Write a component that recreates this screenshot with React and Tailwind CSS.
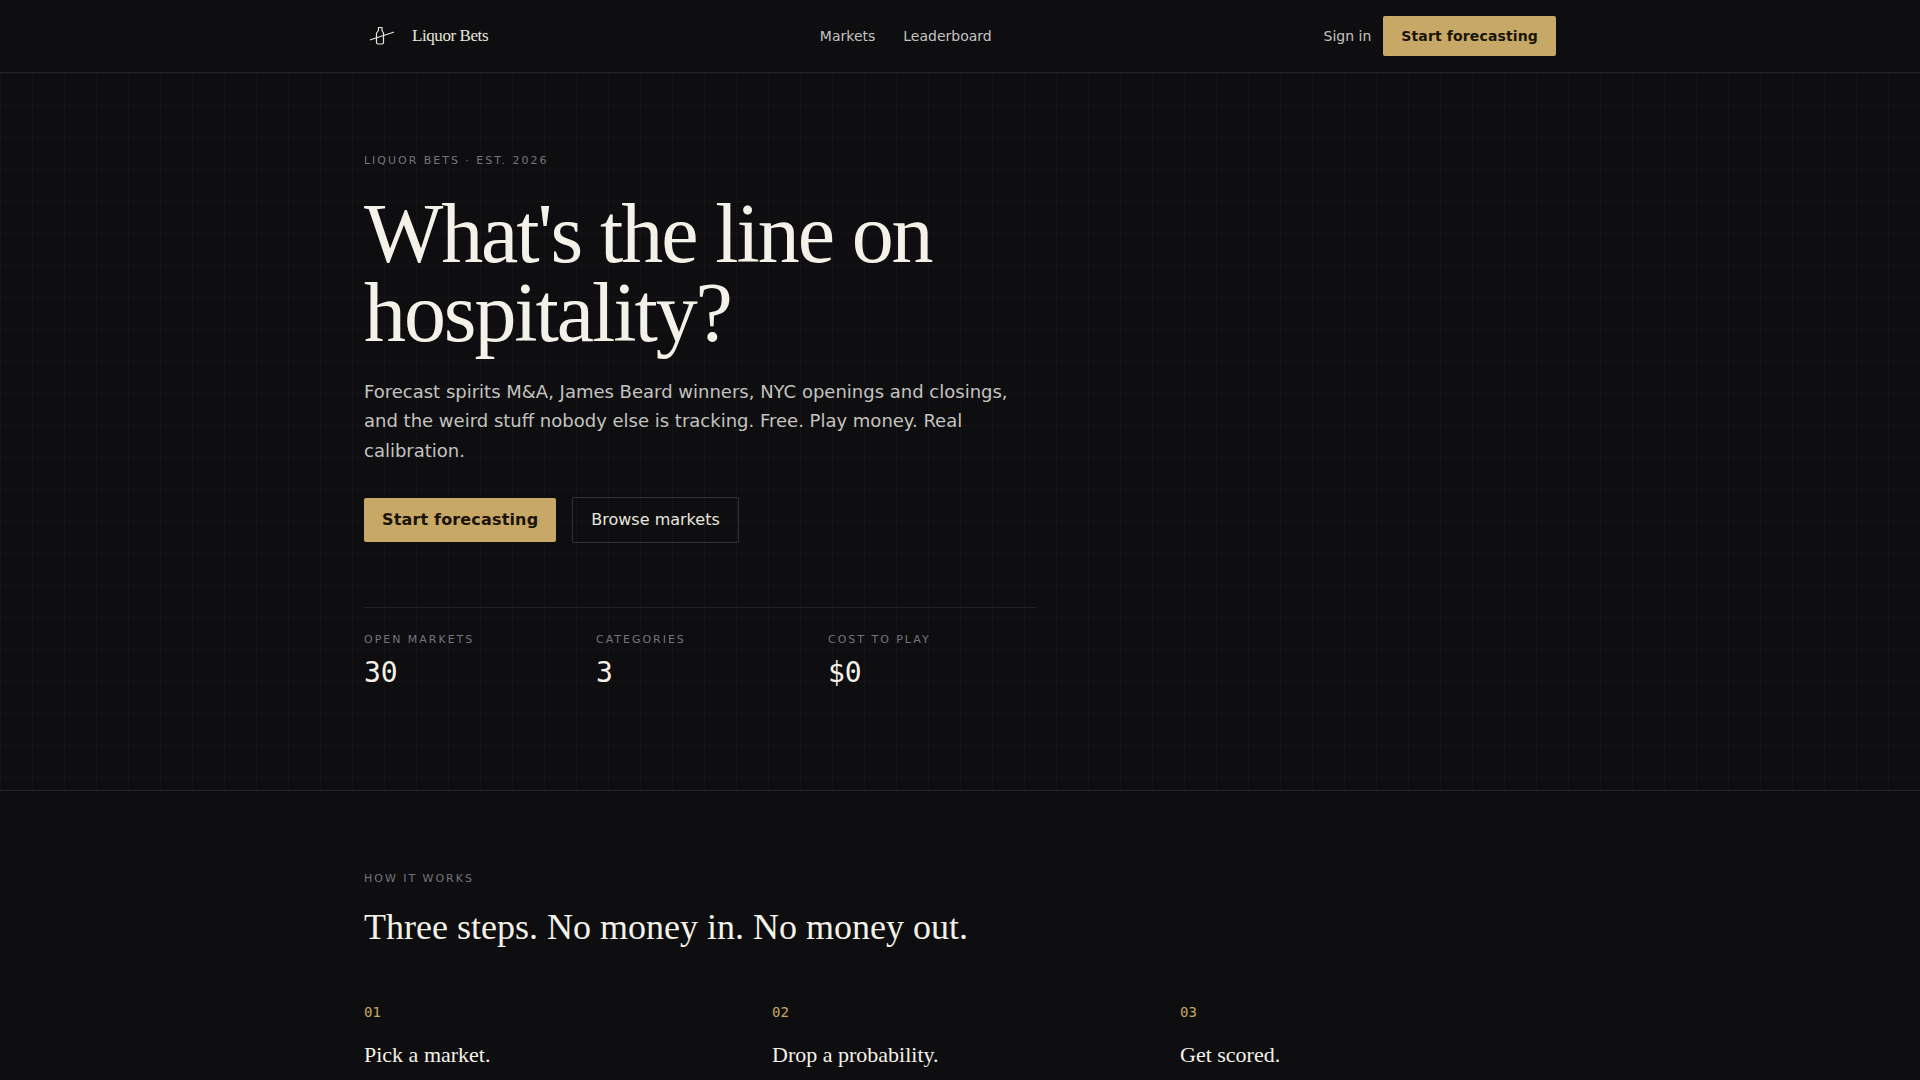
const stats = [
  { label: "Open markets", value: "30" },
  { label: "Categories", value: "3" },
  { label: "Cost to play", value: "$0" },
];

const steps = [
  { number: "01", title: "Pick a market." },
  { number: "02", title: "Drop a probability." },
  { number: "03", title: "Get scored." },
];

const Logo = () => (
  <svg
    viewBox="0 0 36 36"
    className="h-9 w-9"
    fill="none"
    stroke="currentColor"
    strokeLinecap="round"
    strokeLinejoin="round"
    aria-hidden="true"
  >
    <path
      d="M14.5 9.5h3.5v3l1.500 2.500v9.500a1.500 1.500 0 0 1-1.500 1.500h-4a1.500 1.500 0 0 1-1.500-1.500v-9.500l2-2.500v-3z"
      strokeWidth="1.2"
    />
    <path d="M6.5 21.8L29.5 14.2" strokeWidth="1.2" />
  </svg>
);

const Eyebrow = ({ children }) => (
  <p className="text-[11px] leading-4 tracking-[0.18em] uppercase text-[#75747d]">{children}</p>
);

const Header = () => (
  <header className="border-b border-[#232326]">
    <div className="mx-auto flex h-18 max-w-[1240px] items-center justify-between px-6">
      <a href="#" className="flex items-center gap-3 text-[#e8e6df]">
        <Logo />
        <span className="font-['Liberation_Serif',serif] text-[17px] tracking-tight">
          Liquor Bets
        </span>
      </a>

      <nav className="flex items-center gap-7 text-sm text-[#c4c3c0]">
        <a href="#markets">Markets</a>
        <a href="#leaderboard">Leaderboard</a>
      </nav>

      <div className="flex items-center gap-3 text-sm">
        <a href="#signin" className="text-[#c4c3c0]">
          Sign in
        </a>
        <button
          type="button"
          className="h-10 rounded-[2px] bg-[#c8a866] px-[18px] font-semibold tracking-[0.01em] text-[#1a1408]"
        >
          Start forecasting
        </button>
      </div>
    </div>
  </header>
);

const Hero = () => (
  <section className="border-b border-[#232326] bg-[linear-gradient(to_right,#141416_1px,transparent_1px),linear-gradient(to_bottom,#141416_1px,transparent_1px)] bg-[size:32px_32px]">
    <div className="mx-auto max-w-[1240px] px-6 pt-20 pb-24">
      <Eyebrow>Liquor Bets · Est. 2026</Eyebrow>

      <h1 className="mt-[25px] max-w-3xl font-['Liberation_Serif',serif] text-[84px] leading-[79px] tracking-tight">
        What's the line on hospitality?
      </h1>

      <p className="mt-[25px] max-w-2xl text-lg leading-relaxed text-[#c4c3c0]">
        Forecast spirits M&A, James Beard winners, NYC openings and closings, and the weird stuff
        nobody else is tracking. Free. Play money. Real calibration.
      </p>

      <div className="mt-8 flex items-center gap-4">
        <button
          type="button"
          className="h-11 rounded-[2px] bg-[#c8a866] px-[18px] font-semibold tracking-[0.01em] text-[#1a1408]"
        >
          Start forecasting
        </button>
        <button
          type="button"
          className="h-[46px] rounded-[2px] border border-[#323236] px-[18px] text-[#e8e6df]"
        >
          Browse markets
        </button>
      </div>

      <dl className="mt-16 grid max-w-2xl grid-cols-3 gap-6 border-t border-[#232326] pt-6">
        {stats.map((stat) => (
          <div key={stat.label}>
            <dt className="text-[11px] leading-4 tracking-[0.18em] uppercase text-[#75747d]">
              {stat.label}
            </dt>
            <dd className="mt-1 font-['DejaVu_Sans_Mono',monospace] text-[28px] leading-[42px]">
              {stat.value}
            </dd>
          </div>
        ))}
      </dl>
    </div>
  </section>
);

const HowItWorks = () => (
  <section className="mx-auto max-w-[1240px] px-6 pt-20">
    <Eyebrow>How it works</Eyebrow>
    <h2 className="mt-5 font-['Liberation_Serif',serif] text-4xl">
      Three steps. No money in. No money out.
    </h2>

    <ol className="mt-14 grid grid-cols-3 gap-8">
      {steps.map((step) => (
        <li key={step.number}>
          <p className="font-['DejaVu_Sans_Mono',monospace] text-sm leading-[18px] text-[#c8a866]">
            {step.number}
          </p>
          <h3 className="mt-[18px] font-['Liberation_Serif',serif] text-[22px] leading-8">
            {step.title}
          </h3>
        </li>
      ))}
    </ol>
  </section>
);

const App = () => (
  <div className="min-h-screen bg-[#0e0e10] font-['DejaVu_Sans',sans-serif] text-[#f4f1e8]">
    <Header />
    <main>
      <Hero />
      <HowItWorks />
    </main>
  </div>
);

export default App;
